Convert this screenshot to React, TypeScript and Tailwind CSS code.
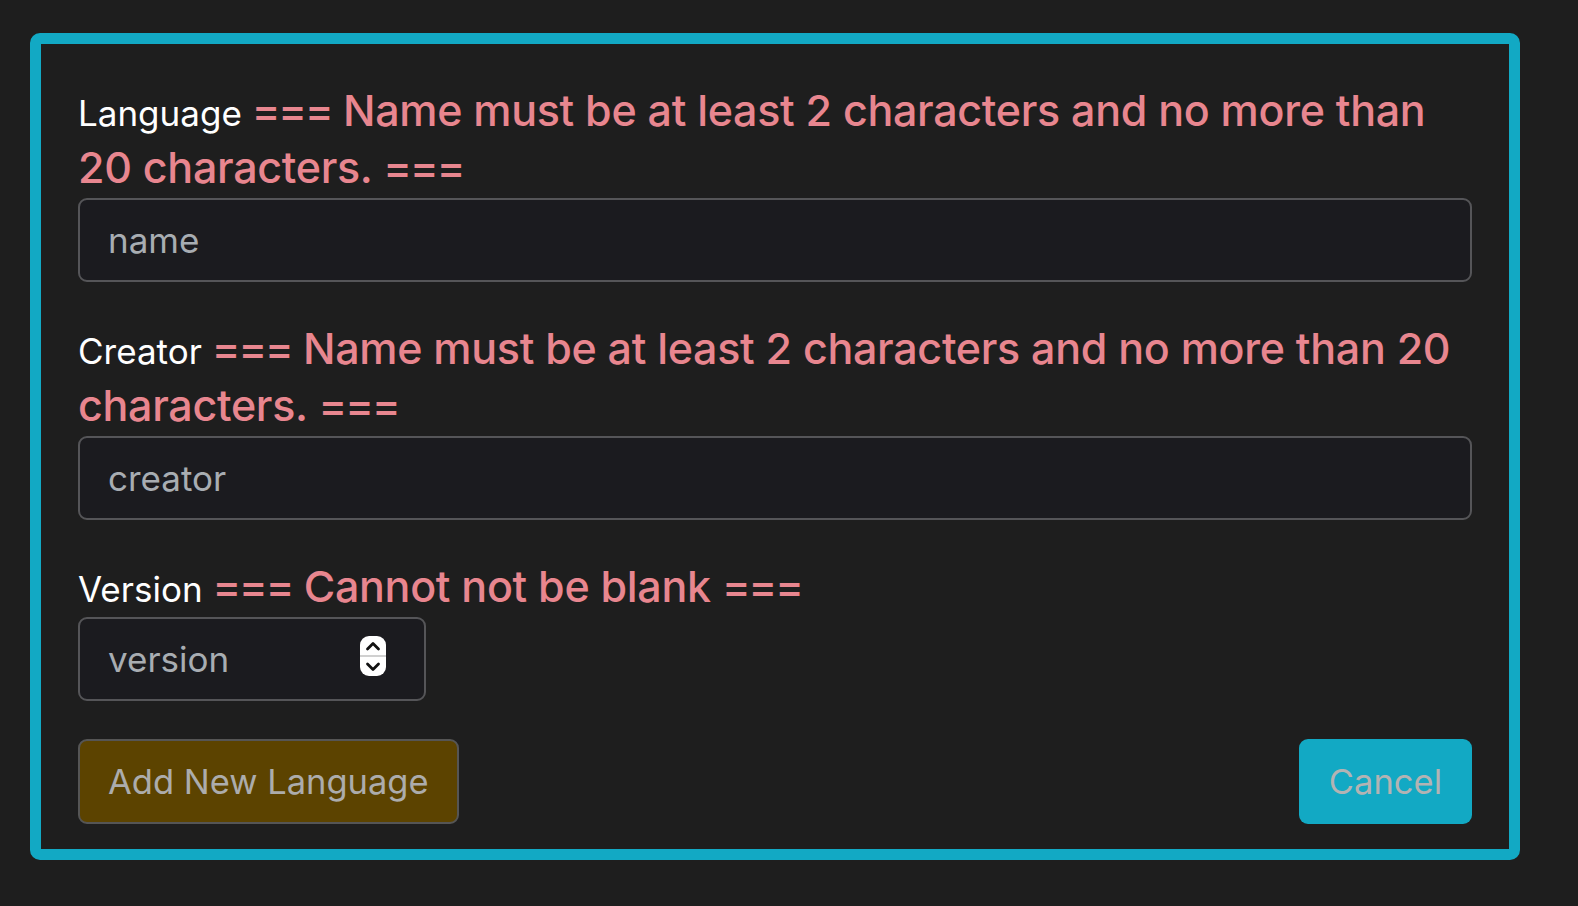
import { ReactNode } from 'react';

const font = { fontFamily: 'Inter, "Noto Sans", sans-serif' };

function FieldLabel({ name, error }: { name: string; error: string }) {
  return (
    <div className="text-[35px] leading-[50px] text-white">
      {name}{' '}
      <span className="text-[43px] font-medium leading-[57px] tracking-[-0.3px] text-[#e8868f]">
        <span className="tracking-[-2px]">===</span> {error} <span className="tracking-[-2px]">===</span>
      </span>
    </div>
  );
}

function Field({ children }: { children: ReactNode }) {
  return <div className="flex flex-col">{children}</div>;
}

function Spinner() {
  return (
    <div className="pointer-events-none absolute top-[19px] right-[40px] flex h-[40px] w-[26px] flex-col overflow-hidden rounded-[9px] bg-white">
      <div className="flex flex-1 items-center justify-center border-b-2 border-[#d0d0d0]">
        <svg width="16" height="10" viewBox="0 0 16 10" fill="none">
          <path d="M2.5 8 L8 2.5 L13.5 8" stroke="#111" strokeWidth="2.8" strokeLinecap="round" strokeLinejoin="round" />
        </svg>
      </div>
      <div className="flex flex-1 items-center justify-center">
        <svg width="16" height="10" viewBox="0 0 16 10" fill="none">
          <path d="M2.5 2 L8 7.5 L13.5 2" stroke="#111" strokeWidth="2.8" strokeLinecap="round" strokeLinejoin="round" />
        </svg>
      </div>
    </div>
  );
}

export default function App() {
  const inputClass =
    'h-[84px] rounded-[9px] border-2 border-[#555558] bg-[#1b1b1f] px-[28px] text-[35px] text-[#e8e8e8] outline-none placeholder:text-[#a8adb2]';

  return (
    <div className="min-h-screen bg-[#1e1e1e] pt-[33px] pl-[30px]" style={font}>
      <div className="w-[1490px] rounded-[10px] border-[11px] border-[#12a9c4] px-[37px] pt-[38px] pb-[25px]">
        <div className="flex flex-col gap-[38px]">
          <Field>
            <FieldLabel name="Language" error="Name must be at least 2 characters and no more than 20 characters." />
            <input className={`mt-[2px] ${inputClass}`} placeholder="name" />
          </Field>
          <Field>
            <FieldLabel name="Creator" error="Name must be at least 2 characters and no more than 20 characters." />
            <input className={`mt-[2px] ${inputClass}`} placeholder="creator" />
          </Field>
          <Field>
            <FieldLabel name="Version" error="Cannot not be blank" />
            <div className="relative mt-[2px] w-[348px]">
              <input type="text" className={`w-full ${inputClass}`} placeholder="version" />
              <Spinner />
            </div>
          </Field>
          <div className="flex items-center justify-between">
            <button className="h-[85px] rounded-[9px] border-2 border-[#555555] bg-[#5c4300] px-[28px] text-[34.5px] text-[#acacac]">
              Add New Language
            </button>
            <button className="h-[85px] rounded-[9px] bg-[#12a9c4] px-[30px] text-[34.5px] text-[#b3b3b3]">
              Cancel
            </button>
          </div>
        </div>
      </div>
    </div>
  );
}
